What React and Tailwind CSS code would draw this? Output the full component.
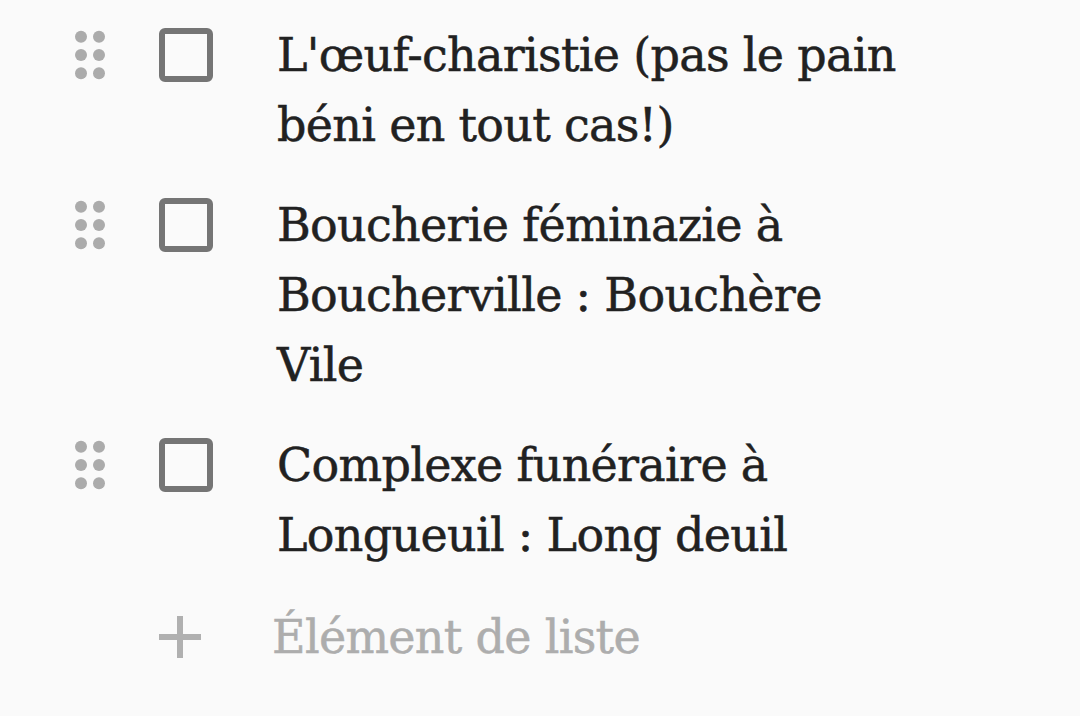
const items = [
  "L'œuf-charistie (pas le pain béni en tout cas!)",
  "Boucherie féminazie à Boucherville : Bouchère Vile",
  "Complexe funéraire à Longueuil : Long deuil",
];

function DragHandle() {
  return (
    <svg width="32" height="70" viewBox="0 0 32 70" className="shrink-0 text-[#ababab]">
      {[16.7, 35, 53.3].map((cy) =>
        [7, 25].map((cx) => <circle key={`${cx}-${cy}`} cx={cx} cy={cy} r="6" fill="currentColor" />)
      )}
    </svg>
  );
}

function ListItem({ text }) {
  return (
    <div className="flex items-start">
      <DragHandle />
      <div className="ml-[53px] mt-[8px] h-[54px] w-[54px] shrink-0 rounded-[6px] border-[6px] border-[#757575]" />
      <p className="ml-[64px] w-[640px] text-[46px] leading-[70px] tracking-[-0.7px] text-[#212121] [-webkit-text-stroke:0.5px_#212121]">
        {text}
      </p>
    </div>
  );
}

export default function App() {
  return (
    <div
      className="min-h-[716px] w-[1080px] bg-[#fafafa] pl-[74px] pt-[20px]"
      style={{ fontFamily: '"DejaVu Serif", "Liberation Serif", serif' }}
    >
      <div className="flex flex-col gap-[30px]">
        {items.map((t) => (
          <ListItem key={t} text={t} />
        ))}
        <div className="flex items-center pt-[2px]">
          <svg width="42" height="42" viewBox="0 0 42 42" className="ml-[85px] shrink-0 text-[#b0b0b0]">
            <rect x="0" y="18" width="42" height="6" fill="currentColor" />
            <rect x="18" y="0" width="6" height="42" fill="currentColor" />
          </svg>
          <span className="ml-[71px] text-[46px] leading-[70px] tracking-[-0.7px] text-[#adadad] [-webkit-text-stroke:0.5px_#adadad]">
            Élément de liste
          </span>
        </div>
      </div>
    </div>
  );
}
